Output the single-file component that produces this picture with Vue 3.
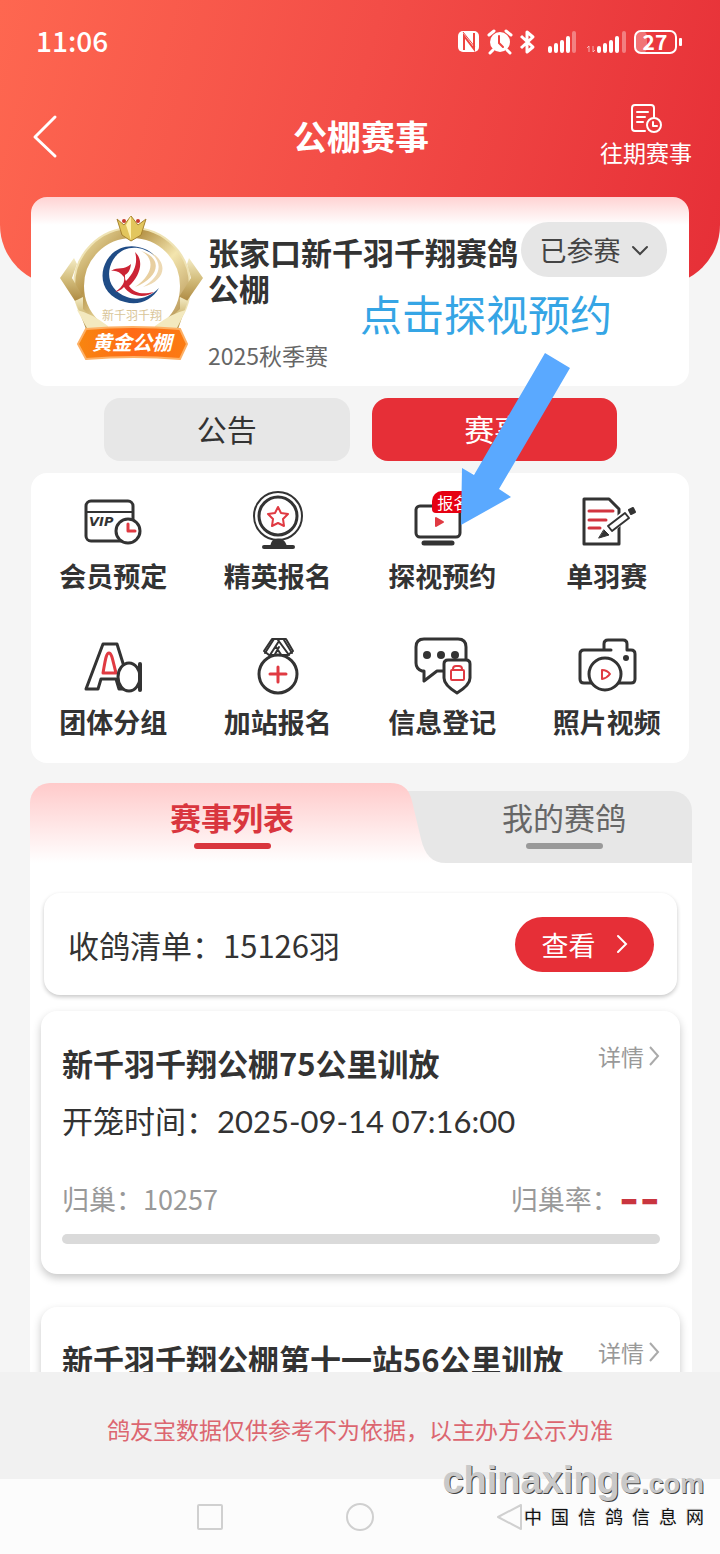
<template>
  <div class="page">
    <header class="header">
      <div class="status-bar">
        <span class="status-time">11:06</span>
        <svg class="status-icons" viewBox="0 0 228 28" aria-hidden="true">
          <!-- NFC -->
          <rect x="2" y="3" width="21" height="21" rx="5" fill="#fff" />
          <path d="M8 22V8l10 13V5" fill="none" stroke="#ee4440" stroke-width="2" />
          <path d="M7 4l12 15" stroke="#ee4440" stroke-width="1" />
          <!-- 闹钟 -->
          <circle cx="44" cy="14" r="10" fill="#fff" />
          <path d="M33 7l5-4M55 7l-5-4M37 22l-3 3M51 22l3 3" stroke="#fff" stroke-width="3" stroke-linecap="round" />
          <path d="M43 8v7l4 4" fill="none" stroke="#ee4440" stroke-width="2" stroke-linecap="round" />
          <!-- 蓝牙 -->
          <path d="M65 8l12 11-6 5V4l6 5-12 11" fill="none" stroke="#fff" stroke-width="3" stroke-linejoin="round" />
          <!-- 信号 -->
          <g stroke="#fff" stroke-width="4" stroke-linecap="round">
            <path d="M94 20v3M100 17v6M106 14v9M112 10v13M143 20v3M149 17v6M155 14v9M161 10v13" />
            <path d="M118 5v18M168 5v18" opacity=".35" />
          </g>
          <path d="M131 20l2-2v6M139 22l-2 2v-6" fill="none" stroke="#fff" stroke-width="1" opacity=".6" />
          <!-- 电池 -->
          <rect x="179" y="3" width="12" height="22" rx="5" fill="#fff" opacity=".3" />
          <rect x="179" y="3" width="41" height="22" rx="6" fill="none" stroke="#fff" stroke-width="2" />
          <rect x="223" y="10" width="3" height="8" rx="1" fill="#fff" />
          <text x="199" y="22" text-anchor="middle" class="battery-text">27</text>
        </svg>
      </div>
      <nav class="nav-bar">
        <button class="back-btn" type="button" aria-label="返回">
          <svg viewBox="0 0 28 46"><path d="M25 3L5 23l20 19" fill="none" stroke="#fff" stroke-width="3" stroke-linecap="round" stroke-linejoin="round" /></svg>
        </button>
        <h1 class="nav-title">公棚赛事</h1>
        <button class="past-btn" type="button">
          <svg viewBox="0 0 32 32" fill="none" stroke="#fff" stroke-width="2" stroke-linecap="round" stroke-linejoin="round">
            <path d="M15 28H5a3 3 0 0 1-3-3V5a3 3 0 0 1 3-3h16a3 3 0 0 1 3 3v9" />
            <path d="M7 9h11M7 14h8M7 19h6" />
            <circle cx="24" cy="22" r="7" />
            <path d="M23 19v4h4" />
          </svg>
          <span>往期赛事</span>
        </button>
      </nav>
    </header>

    <main class="content">
      <section class="loft-card">
        <svg class="loft-logo" viewBox="0 0 144 148" role="img" aria-label="黄金公棚">
          <defs>
            <linearGradient id="gold" x1="0" y1="0" x2="1" y2="1">
              <stop offset="0" stop-color="#f2e6b0" />
              <stop offset=".3" stop-color="#b8964c" />
              <stop offset=".55" stop-color="#f3e5ae" />
              <stop offset="1" stop-color="#a37b38" />
            </linearGradient>
            <linearGradient id="wing" x1="0" y1="0" x2="0" y2="1">
              <stop offset="0" stop-color="#f4ecc6" />
              <stop offset=".5" stop-color="#d3bd7c" />
              <stop offset="1" stop-color="#ae8a42" />
            </linearGradient>
            <linearGradient id="ribbon" x1="0" y1="0" x2="1" y2="0">
              <stop offset="0" stop-color="#f8860f" />
              <stop offset=".5" stop-color="#ff6a18" />
              <stop offset="1" stop-color="#fb7c12" />
            </linearGradient>
          </defs>
          <ellipse cx="72" cy="70" rx="53" ry="53" fill="#fff" stroke="url(#gold)" stroke-width="10" />
          <ellipse cx="72" cy="70" rx="58" ry="58" fill="none" stroke="#efe3b4" stroke-width="2" />
          <path d="M14 42L0 62l15 23 8-4L12 62l5-14z" fill="url(#wing)" />
          <path d="M129 42l14 20-16 23-8-4 12-19-4-14z" fill="url(#wing)" />
          <path d="M15 85l8-4v12l21 20H26z" fill="url(#wing)" />
          <path d="M128 85l-8-4v12l-22 20h20z" fill="url(#wing)" />
          <path d="M17 94q14 3 31 16v4H28z" fill="#f3e9bf" />
          <path d="M126 94q-14 3-31 16v4h21z" fill="#f3e9bf" />
          <path d="M57 3l7 6 7-9 7 9 8-6-5 16-10 6-9-6z" fill="#e2c65d" stroke="#a8832f" stroke-width="1" />
          <path d="M71 0v24l-5-15z" fill="#fff2ae" />
          <circle cx="64" cy="5" r="2" fill="#c73a2c" />
          <circle cx="78" cy="5" r="2" fill="#c73a2c" />
          <path d="M98 43C85 27 59 25 47 44c-10 17-3 37 18 42 14 4 27-2 34-14-10 10-22 13-32 9-18-6-22-23-14-37 9-15 29-17 45-1z" fill="#1f4c86" />
          <path d="M81 35c14 7 13 23-6 36 25-10 28-29 6-36z" fill="#e8cfa0" />
          <path d="M90 36c15 12 9 26-7 35 23-6 26-25 7-35z" fill="#edd9b3" />
          <path d="M75 36c9 8 6 23-6 34 5 7 13 9 25 6-11 8-25 3-30-5-3 3-5 4-9 5 7-5 10-9 9-15-4-5-8-7-13-6 7-5 13 0 20-7-1 7-3 9-6 11 0 3 0 5 1 6 9-9 12-19 9-29z" fill="#cc2435" />
          <text x="72" y="104" text-anchor="middle" class="logo-name">新千羽千翔</text>
          <path d="M26 113q46-4 94 0l7 15-7 15q-46-4-94 0l-8-15z" fill="url(#ribbon)" stroke="#fdb066" stroke-width="2" />
          <text x="72" y="134" text-anchor="middle" class="logo-grade">黄金公棚</text>
        </svg>
        <div class="loft-info">
          <h2 class="loft-name">张家口新千羽千翔赛鸽公棚</h2>
          <p class="loft-season">2025秋季赛</p>
        </div>
        <button class="joined-btn" type="button">
          <span>已参赛</span>
          <svg viewBox="0 0 18 12"><path d="M2 3l7 7 7-7" fill="none" stroke="#444" stroke-width="2" stroke-linecap="round" /></svg>
        </button>
      </section>

      <div class="switch-row">
        <button class="switch-btn" type="button">公告</button>
        <button class="switch-btn active" type="button">赛事</button>
      </div>

      <section class="menu-card">
        <button v-for="item in menus" :key="item.name" class="menu-item" type="button">
          <svg class="menu-icon" viewBox="0 0 64 64" fill="none" stroke="#333" stroke-width="3" stroke-linejoin="round" stroke-linecap="round">
            <template v-if="item.icon === 'vip'">
              <rect x="5" y="11" width="47" height="40" rx="5" />
              <path d="M5 22h47" stroke-width="2" />
              <text x="8" y="36" class="vip-text">VIP</text>
              <circle cx="47" cy="41" r="12" fill="#fff" />
              <path d="M47 34v7h7" stroke="#e03a42" />
            </template>
            <template v-else-if="item.icon === 'elite'">
              <circle cx="32" cy="26" r="24" stroke-width="2" />
              <circle cx="32" cy="26" r="19" />
              <path d="M32 17l3 6 7 1-5 5 1 7-6-3-6 3 1-7-5-5 7-1z" stroke="#e03a42" stroke-width="2" />
              <path d="M26 55q1-5 6-5t7 5z" fill="#333" />
              <path d="M18 57h29" stroke-width="4" />
            </template>
            <template v-else-if="item.icon === 'visit'">
              <rect x="6" y="16" width="44" height="31" rx="4" />
              <path d="M14 53h28" stroke-width="5" />
              <path d="M26 28v8l7-4z" fill="#e03a42" stroke="#e03a42" stroke-width="2" />
            </template>
            <template v-else-if="item.icon === 'single'">
              <path d="M9 9h25l10 10v35H9z" />
              <path d="M14 21h24M14 30h17M14 38h11" stroke="#d2343f" />
              <path d="M30 42L56 21" stroke="#fff" stroke-width="10" stroke-linecap="butt" />
              <path d="M33 36l17-13 4 5-17 13z" stroke-width="2" />
              <path d="M29 40l5 5-10 3z" fill="#333" stroke-width="1" />
              <path d="M54 20l4-2 2 4-4 2z" fill="#333" stroke-width="2" />
            </template>
            <template v-else-if="item.icon === 'team'">
              <path d="M22 8h14l14 45H38l-3-10H20l-3 10H5z" />
              <path d="M28 17c3 0 4 9 7 20H22c2-11 3-20 6-20z" stroke="#e03a42" />
              <ellipse cx="48" cy="41" rx="11" ry="14" fill="#fff" />
              <path d="M59 28v26" stroke-width="4" />
            </template>
            <template v-else-if="item.icon === 'medal'">
              <path d="M26 3h14l7 12-5 4H23l-5-4z" fill="#fff" stroke-width="2" />
              <path d="M28 3L19 17M33 5l-9 14M32 4l11 15M38 4l8 13M30 11l6 9M33 11l-5 9" stroke-width="2" />
              <circle cx="32" cy="38" r="19" fill="#fff" />
              <path d="M32 31v15M24 38h16" stroke="#e03a42" />
            </template>
            <template v-else-if="item.icon === 'message'">
              <path d="M34 35h-7l-13 10V35h-2q-6-2-6-8V11q0-8 8-8h34q8 0 8 8v12" />
              <g fill="#333" stroke="none">
                <circle cx="17" cy="19" r="4" />
                <circle cx="31" cy="19" r="4" />
                <circle cx="45" cy="19" r="4" />
              </g>
              <path d="M34 28q0-4 4-4h18q4 0 4 4v14q0 7-13 15-13-8-13-15z" fill="#fff" />
              <g stroke="#e03a42" stroke-width="2">
                <rect x="41" y="34" width="13" height="10" rx="1" />
                <path d="M43 34v-1q0-3 3-3h3q3 0 3 3v1" />
              </g>
            </template>
            <template v-else>
              <path d="M36 14H9q-4 0-4 4v25q0 4 4 4h47q4 0 4-4V18q0-4-4-4h-4V8q0-4-4-4H33q-4 0-4 4v6" />
              <circle cx="30" cy="38" r="16" fill="#fff" />
              <path d="M27 34v9q5-1 8-5-3-4-8-4z" stroke="#e03a42" stroke-width="2" />
              <circle cx="51" cy="22" r="3" fill="#333" stroke="none" />
            </template>
          </svg>
          <span v-if="item.badge" class="menu-badge">{{ item.badge }}</span>
          <span class="menu-name">{{ item.name }}</span>
        </button>
      </section>

      <section class="panel">
        <div class="tabs">
          <button class="tab active" type="button">赛事列表</button>
          <svg class="tab-edge" viewBox="0 0 56 80" aria-hidden="true">
            <defs>
              <linearGradient id="tabFade" x1="0" y1="0" x2="0" y2="1">
                <stop offset="0" stop-color="#ffcaca" />
                <stop offset="1" stop-color="#fff" />
              </linearGradient>
            </defs>
            <path d="M0 8h56v72H0z" fill="#e7e7e7" />
            <path d="M0 0c12 0 19 5 22 18l9 38c4 16 11 24 25 24H0z" fill="url(#tabFade)" />
          </svg>
          <button class="tab mine" type="button">我的赛鸽</button>
        </div>

        <div class="summary-card">
          <span>收鸽清单：15126羽</span>
          <button class="view-btn" type="button">
            <span>查看</span>
            <svg viewBox="0 0 12 20"><path d="M2 2l8 8-8 8" fill="none" stroke="#fff" stroke-width="2" stroke-linecap="round" /></svg>
          </button>
        </div>

        <article v-for="race in races" :key="race.title" class="race-card">
          <div class="race-head">
            <h3 class="race-title">{{ race.title }}</h3>
            <a class="race-detail" href="#">
              <span>详情</span>
              <svg viewBox="0 0 12 20"><path d="M2 1l8 9-8 9" fill="none" stroke="#aaa" stroke-width="2" /></svg>
            </a>
          </div>
          <p class="race-time">开笼时间：<span class="race-date">{{ race.time }}</span></p>
          <div class="race-meta">
            <span>归巢：{{ race.homing }}</span>
            <span class="race-rate">归巢率：<b>--</b></span>
          </div>
          <div class="race-progress"></div>
        </article>
      </section>
    </main>

    <p class="notice">鸽友宝数据仅供参考不为依据，以主办方公示为准</p>

    <footer class="system-nav">
      <svg viewBox="0 0 28 28"><rect x="2" y="2" width="24" height="24" rx="1" /></svg>
      <svg viewBox="0 0 28 28"><circle cx="14" cy="14" r="13" /></svg>
      <svg viewBox="0 0 28 28"><path d="M25 2v24L2 14z" /></svg>
    </footer>

    <!-- 操作提示 -->
    <div class="guide">
      <p class="guide-text">点击探视预约</p>
      <svg class="guide-arrow" viewBox="0 0 110 172"><path d="M84 0l25 15-71 121 12 8-50 28 1-57 12 7z" fill="#5aa9ff" /></svg>
    </div>

    <div class="watermark">
      <div class="watermark-site">chinaxinge<small>.com</small></div>
      <div class="watermark-name">中&ensp;国&ensp;信&ensp;鸽&ensp;信&ensp;息&ensp;网</div>
    </div>
  </div>
</template>

<script setup>
const menus = [
  { name: '会员预定', icon: 'vip' },
  { name: '精英报名', icon: 'elite' },
  { name: '探视预约', icon: 'visit', badge: '报名' },
  { name: '单羽赛', icon: 'single' },
  { name: '团体分组', icon: 'team' },
  { name: '加站报名', icon: 'medal' },
  { name: '信息登记', icon: 'message' },
  { name: '照片视频', icon: 'camera' }
]

const races = [
  { title: '新千羽千翔公棚75公里训放', time: '2025-09-14 07:16:00', homing: 10257 },
  { title: '新千羽千翔公棚第十一站56公里训放', time: '', homing: '' }
]
</script>

<style>
body {
  margin: 0;
  background: #f5f5f5;
}
</style>

<style scoped>
.page {
  position: relative;
  display: flex;
  flex-direction: column;
  height: 100vh;
  overflow: hidden;
  background: #f5f5f5;
  color: #333;
  font-family: "Noto Sans CJK SC", sans-serif;
}

h1,
h2,
h3,
p {
  margin: 0;
}

button {
  padding: 0;
  border: 0;
  background: none;
  color: inherit;
  font-family: inherit;
  cursor: pointer;
}

svg {
  display: block;
}

/* 顶部 */
.header {
  flex: none;
  padding-bottom: 95px;
  border-radius: 0 0 60px 60px;
  background: linear-gradient(105deg, #fe6750 0%, #f34d47 48%, #e62f37 100%);
  color: #fff;
}

.status-bar {
  display: flex;
  align-items: center;
  justify-content: space-between;
  height: 84px;
  padding: 0 36px;
}

.status-time {
  padding-bottom: 4px;
  font-size: 28px;
  font-weight: 500;
}

.status-icons {
  width: 228px;
  height: 28px;
  overflow: visible;
}

.battery-text {
  fill: #fff;
  font-size: 21px;
  font-weight: 700;
}

.nav-bar {
  display: grid;
  grid-template-columns: 1fr auto 1fr;
  align-items: center;
  height: 106px;
  padding: 0 28px 0 30px;
}

.back-btn svg {
  width: 28px;
  height: 46px;
}

.nav-title {
  padding-bottom: 2px;
  font-size: 34px;
  font-weight: 700;
  line-height: 48px;
}

.past-btn {
  display: flex;
  flex-direction: column;
  align-items: center;
  justify-self: end;
  padding-bottom: 4px;
  gap: 2px;
  font-size: 23px;
  line-height: 30px;
}

.past-btn svg {
  width: 32px;
  height: 32px;
}

/* 内容 */
.content {
  position: relative;
  flex: 1;
  min-height: 0;
  margin-top: -88px;
  overflow: hidden;
}

.loft-card {
  display: flex;
  height: 189px;
  margin: 0 31px;
  padding: 0 22px 0 29px;
  box-sizing: border-box;
  border-radius: 16px;
  background: linear-gradient(#ffd3d3, #fff 28px);
}

.loft-logo {
  flex: none;
  width: 144px;
  height: 148px;
  margin-top: 19px;
}

.logo-name {
  fill: #d9c598;
  font-size: 12px;
}

.logo-grade {
  fill: #fff;
  font-size: 20px;
  font-weight: 700;
  font-style: italic;
}

.loft-info {
  flex: 1;
  margin-left: 4px;
  padding-top: 37px;
}

.loft-name {
  font-size: 31px;
  font-weight: 700;
  line-height: 36px;
}

.loft-season {
  margin-top: 34px;
  color: #666;
  font-size: 23px;
  line-height: 30px;
}

.joined-btn {
  display: flex;
  flex: none;
  align-items: center;
  justify-content: center;
  gap: 10px;
  width: 146px;
  height: 55px;
  margin-top: 25px;
  border-radius: 28px;
  background: #e6e6e6;
  color: #444;
  font-size: 27px;
}

.joined-btn svg {
  width: 18px;
  height: 12px;
}

.switch-row {
  display: grid;
  grid-template-columns: 1fr 1fr;
  gap: 22px;
  padding: 12px 103px 12px 104px;
}

.switch-btn {
  height: 63px;
  padding-bottom: 4px;
  border-radius: 16px;
  background: #e7e7e7;
  font-size: 30px;
}

.switch-btn.active {
  background: #e62f37;
  color: #fff;
}

/* 功能入口 */
.menu-card {
  display: grid;
  grid-template-columns: repeat(4, 1fr);
  row-gap: 42px;
  margin: 0 31px;
  padding: 17px 0 23px;
  border-radius: 16px;
  background: #fff;
}

.menu-item {
  position: relative;
  display: flex;
  flex-direction: column;
  align-items: center;
  gap: 4px;
}

.menu-icon {
  width: 64px;
  height: 64px;
}

.vip-text {
  fill: #333;
  stroke: none;
  font-family: "DejaVu Sans", sans-serif;
  font-size: 13px;
  font-weight: 700;
  font-style: italic;
}

.menu-badge {
  position: absolute;
  top: 1px;
  left: 50%;
  width: 42px;
  margin-left: -10px;
  border-radius: 10px 10px 10px 4px;
  background: #e60012;
  color: #fff;
  font-size: 16px;
  line-height: 22px;
}

.menu-name {
  font-size: 27px;
  font-weight: 700;
  line-height: 36px;
}

/* 列表 */
.panel {
  display: flow-root;
  margin: 20px 28px 0 30px;
  border-radius: 20px 20px 0 0;
  background: linear-gradient(#f5f5f5 80px, #fff 80px);
}

.tabs {
  display: flex;
  height: 80px;
}

.tab {
  display: flex;
  flex-direction: column;
  align-items: center;
  gap: 6px;
  box-sizing: border-box;
  font-size: 31px;
  line-height: 40px;
}

.tab::after {
  width: 77px;
  height: 6px;
  border-radius: 3px;
  background: #999;
  content: "";
}

.tab.active {
  flex: 1;
  padding: 14px 0 0 44px;
  border-radius: 20px 0 0 0;
  background: linear-gradient(#ffcaca, #fff);
  color: #d9363e;
  font-weight: 700;
}

.tab.active::after {
  background: #d9363e;
}

.tab-edge {
  flex: none;
  width: 56px;
  height: 80px;
}

.tab.mine {
  width: 246px;
  height: 72px;
  margin-top: 8px;
  padding: 6px 10px 0 0;
  border-radius: 0 20px 0 0;
  background: #e7e7e7;
  color: #666;
}

.summary-card {
  display: flex;
  align-items: center;
  justify-content: space-between;
  height: 102px;
  margin: 30px 15px 16px 14px;
  padding: 0 23px 0 24px;
  box-sizing: border-box;
  border-radius: 16px;
  background: #fff;
  box-shadow: 0 2px 4px rgba(0, 0, 0, 0.22);
  font-size: 31px;
}

.view-btn {
  display: flex;
  align-items: center;
  justify-content: center;
  gap: 20px;
  width: 139px;
  height: 55px;
  border-radius: 28px;
  background: #e62f37;
  color: #fff;
  font-size: 27px;
}

.view-btn svg {
  width: 12px;
  height: 20px;
}

.race-card {
  margin: 0 12px 33px 11px;
  padding: 30px 20px 30px 21px;
  border-radius: 16px;
  background: #fff;
  box-shadow: 0 4px 8px rgba(0, 0, 0, 0.22);
}

.race-head {
  display: flex;
  align-items: flex-start;
  justify-content: space-between;
}

.race-title {
  font-size: 31px;
  font-weight: 700;
  line-height: 44px;
}

.race-detail {
  display: flex;
  align-items: center;
  gap: 4px;
  color: #999;
  font-size: 23px;
  line-height: 30px;
  text-decoration: none;
}

.race-detail svg {
  width: 12px;
  height: 20px;
}

.race-time {
  margin-top: 13px;
  font-size: 31px;
  line-height: 44px;
}

.race-date {
  font-family: Lato, "Noto Sans CJK SC", sans-serif;
}

.race-meta {
  display: flex;
  justify-content: space-between;
  height: 36px;
  margin-top: 38px;
  color: #999;
  font-size: 27px;
  line-height: 36px;
}

.race-rate {
  display: flex;
}

.race-rate b {
  color: #c9353f;
  font-family: Inter, sans-serif;
  font-size: 44px;
}

.race-progress {
  height: 10px;
  margin-top: 17px;
  border-radius: 5px;
  background: #dadada;
}

/* 底部 */
.notice {
  position: relative;
  flex: none;
  padding: 42px 0 35px;
  background: #f1f1f1;
  color: #dc6670;
  font-size: 23px;
  line-height: 30px;
  text-align: center;
}

.system-nav {
  position: relative;
  display: flex;
  flex: none;
  align-items: center;
  justify-content: center;
  gap: 122px;
  height: 75px;
  background: #fcfcfc;
}

.system-nav svg {
  width: 28px;
  height: 28px;
  fill: none;
  stroke: #d0d0d0;
  stroke-width: 2;
  stroke-linejoin: round;
}

.guide {
  position: absolute;
  top: 283px;
  left: 50%;
  pointer-events: none;
}

.guide-text {
  color: #35a5e5;
  font-size: 42px;
  line-height: 60px;
  white-space: nowrap;
}

.guide-arrow {
  width: 110px;
  height: 172px;
  margin: 10px 0 0 101px;
}

.watermark {
  position: absolute;
  right: 16px;
  bottom: 28px;
  text-align: right;
}

.watermark-site {
  color: #c9c9c9;
  font-family: "Liberation Sans", Arial, sans-serif;
  font-size: 38px;
  font-weight: 700;
  line-height: 44px;
  text-shadow: 1px 1px 0 #444;
}

.watermark-site small {
  font-size: 27px;
}

.watermark-name {
  color: #111;
  font-size: 18px;
  line-height: 20px;
  text-shadow: -1px -1px 0 #ddd;
}
</style>
